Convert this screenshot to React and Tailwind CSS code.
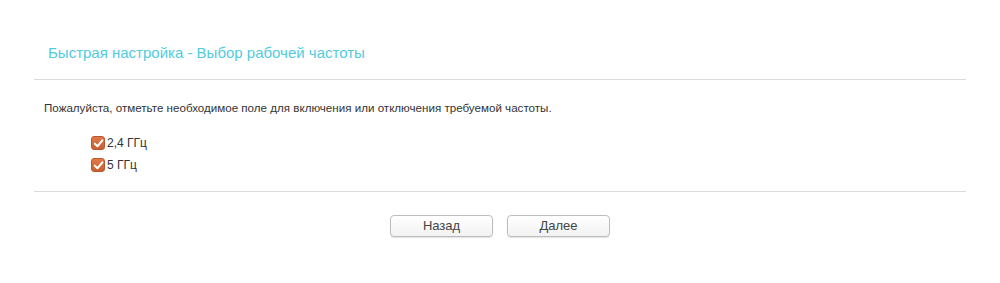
import React, { useState } from 'react';

function Check({ checked, onToggle, label }) {
  return (
    <label className="flex h-[22px] cursor-pointer items-center gap-[2px]" onClick={onToggle}>
      <span
        className={
          checked
            ? 'flex h-[14px] w-[14px] items-center justify-center rounded-[3px] border border-[#b9582c] bg-gradient-to-b from-[#e07a48] to-[#c95f30]'
            : 'flex h-[14px] w-[14px] items-center justify-center rounded-[3px] border border-[#bbb] bg-white'
        }
      >
        {checked && (
          <svg viewBox="0 0 12 12" className="h-[11px] w-[11px]">
            <path d="M2 6.2 L4.9 9 L10.2 2.6" fill="none" stroke="#fff" strokeWidth="2.2" strokeLinecap="round" strokeLinejoin="round" />
          </svg>
        )}
      </span>
      <span className="text-[12px] leading-[14px] text-[#333]">{label}</span>
    </label>
  );
}

export default function App() {
  const [band24, setBand24] = useState(true);
  const [band5, setBand5] = useState(true);

  return (
    <div className="h-[283px] bg-white px-[34px] pt-[43px] font-['Liberation_Sans',Arial,sans-serif]">
      <div className="border-b border-[#dcdcdc] pb-[16px] pl-[14px] text-[15px] leading-[20px] text-[#52cbde]">
        Быстрая настройка - Выбор рабочей частоты
      </div>

      <div className="border-b border-[#dcdcdc] pb-[15px]">
        <p className="mt-[20px] pl-[10px] text-[11.6px] leading-[16px] text-[#333]">
          Пожалуйста, отметьте необходимое поле для включения или отключения требуемой частоты.
        </p>
        <div className="mt-[16px] flex flex-col pl-[57px]">
          <Check checked={band24} onToggle={() => setBand24(!band24)} label="2,4 ГГц" />
          <Check checked={band5} onToggle={() => setBand5(!band5)} label="5 ГГц" />
        </div>
      </div>

      <div className="mt-[23px] flex justify-center gap-[14px]">
        <button className="h-[22px] w-[103px] rounded-[4px] border border-[#bdbdbd] bg-gradient-to-b from-white to-[#f2f2f2] text-[13px] text-[#444] shadow-[0_1px_1px_rgba(0,0,0,0.12)]">
          Назад
        </button>
        <button className="h-[22px] w-[103px] rounded-[4px] border border-[#bdbdbd] bg-gradient-to-b from-white to-[#f2f2f2] text-[13px] text-[#444] shadow-[0_1px_1px_rgba(0,0,0,0.12)]">
          Далее
        </button>
      </div>
    </div>
  );
}
